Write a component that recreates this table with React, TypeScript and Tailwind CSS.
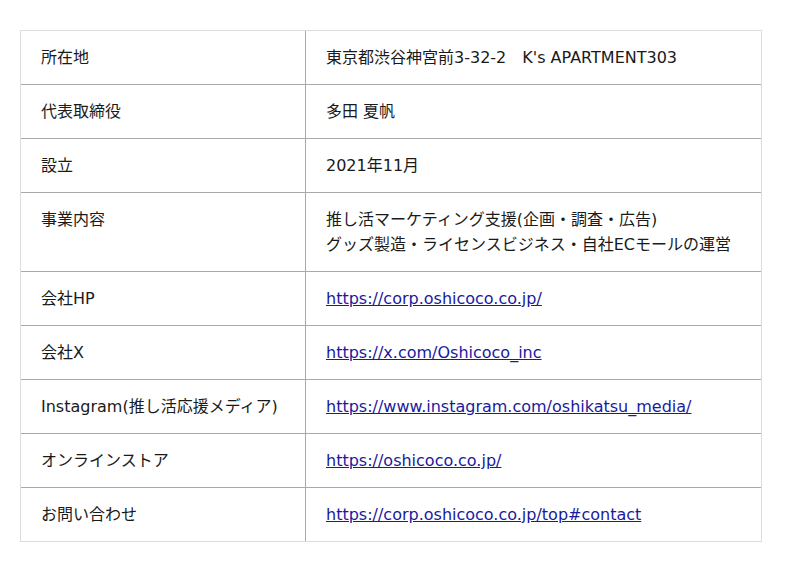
const rows: { label: string; value: React.ReactNode }[] = [
  { label: "所在地", value: "東京都渋谷神宮前3-32-2　K's APARTMENT303" },
  { label: "代表取締役", value: "多田 夏帆" },
  { label: "設立", value: "2021年11月" },
  {
    label: "事業内容",
    value: (
      <>
        推し活マーケティング支援(企画・調査・広告)
        <br />
        グッズ製造・ライセンスビジネス・自社ECモールの運営
      </>
    ),
  },
  { label: "会社HP", value: <Ext href="https://corp.oshicoco.co.jp/" /> },
  { label: "会社X", value: <Ext href="https://x.com/Oshicoco_inc" /> },
  {
    label: "Instagram(推し活応援メディア)",
    value: <Ext href="https://www.instagram.com/oshikatsu_media/" />,
  },
  { label: "オンラインストア", value: <Ext href="https://oshicoco.co.jp/" /> },
  { label: "お問い合わせ", value: <Ext href="https://corp.oshicoco.co.jp/top#contact" /> },
];

function Ext({ href }: { href: string }) {
  return (
    <a href={href} className="text-[#1a1a9c] underline">
      {href}
    </a>
  );
}

export default function App() {
  return (
    <div className="min-h-[572px] bg-white pt-[30px] pl-[20px] font-['DejaVu_Sans','Noto_Sans_CJK_JP',sans-serif] text-[16px] leading-[25px] text-[#1a1a1a]">
      <table className="w-[742px] border-separate border-spacing-0 border border-[#dcdcdc]">
        <tbody>
          {rows.map((r, i) => {
            const last = i === rows.length - 1;
            return (
              <tr key={r.label}>
                <td
                  className={`w-[285px] border-r border-[#a9a9a9] px-5 py-[14px] align-top ${
                    last ? "" : "border-b"
                  }`}
                >
                  {r.label}
                </td>
                <td className={`border-[#a9a9a9] px-5 py-[14px] align-top ${last ? "" : "border-b"}`}>
                  {r.value}
                </td>
              </tr>
            );
          })}
        </tbody>
      </table>
    </div>
  );
}
